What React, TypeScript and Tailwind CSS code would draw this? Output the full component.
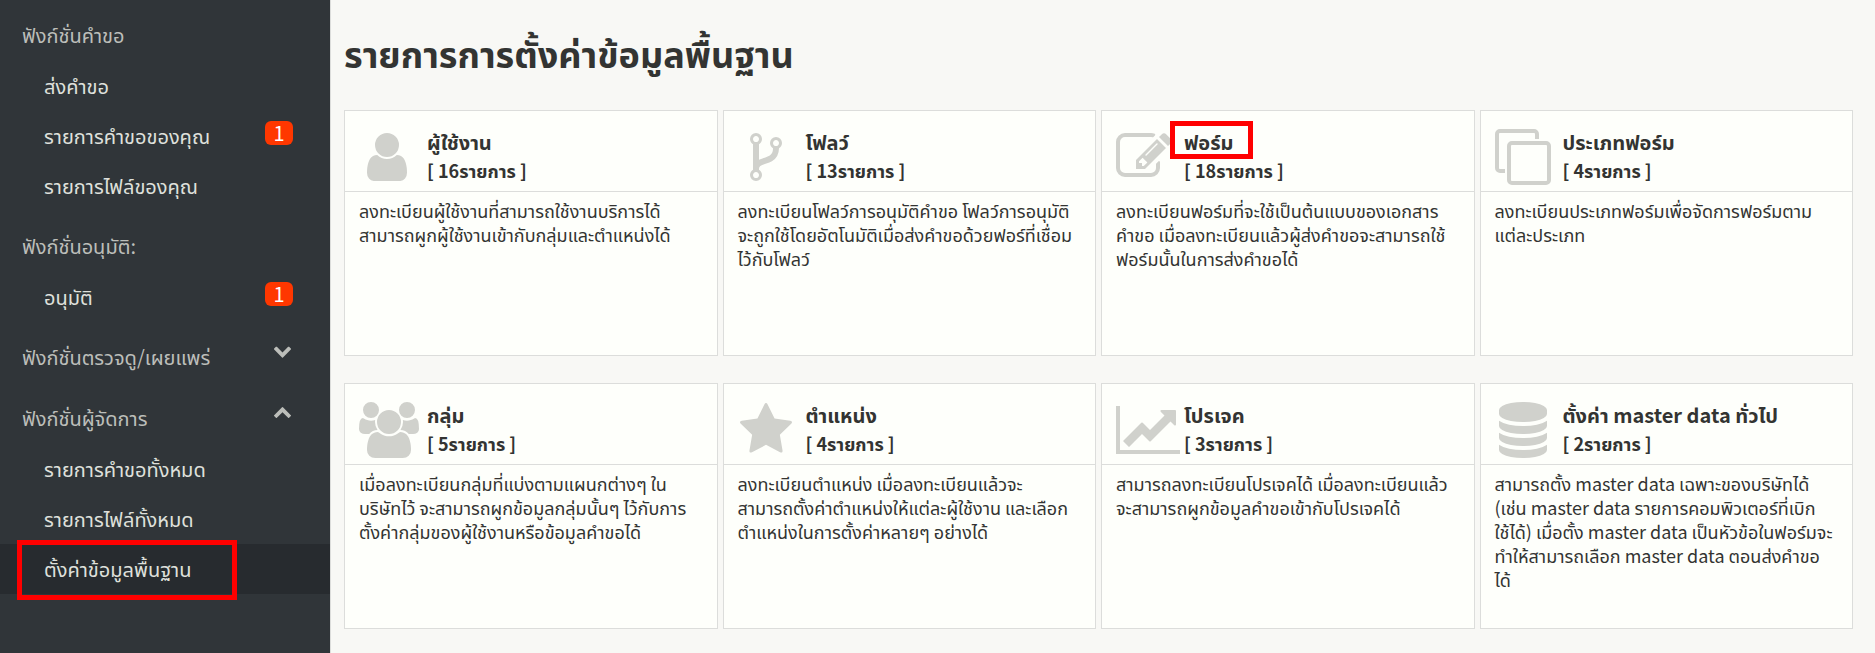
import React from 'react';

interface MenuItem {
  label: string;
  badge?: number;
  active?: boolean;
}

interface MenuSection {
  title: string;
  state?: 'open' | 'closed';
  items: MenuItem[];
}

interface SettingCard {
  icon: keyof typeof iconPaths;
  title: string;
  count: number;
  lines: string[];
  marked?: boolean;
}

const iconPaths = {
  chevronDown: 'M1683 808l-742 741q-19 19-45 19t-45-19l-742-741q-19-19-19-45.5t19-45.5l166-165q19-19 45-19t45 19l531 531 531-531q19-19 45-19t45 19l166 165q19 19 19 45.5t-19 45.5z',
  chevronUp: 'M1683 1331l-166 165q-19 19-45 19t-45-19l-531-531-531 531q-19 19-45 19t-45-19l-166-165q-19-19-19-45.5t19-45.5l742-741q19-19 45-19t45 19l742 741q19 19 19 45.5t-19 45.5z',
  user: 'M1536 1399q0 109-62.5 187t-150.5 78h-854q-88 0-150.5-78t-62.5-187q0-85 8.5-160.5t31.5-152 58.5-131 94-89 134.5-34.5q131 128 313 128t313-128q76 0 134.5 34.5t94 89 58.5 131 31.5 152 8.5 160.5zm-256-887q0 159-112.5 271.5t-271.5 112.5-271.5-112.5-112.5-271.5 112.5-271.5 271.5-112.5 271.5 112.5 112.5 271.5z',
  fork: 'M672 1472q0-40-28-68t-68-28-68 28-28 68 28 68 68 28 68-28 28-68zm0-1152q0-40-28-68t-68-28-68 28-28 68 28 68 68 28 68-28 28-68zm640 128q0-40-28-68t-68-28-68 28-28 68 28 68 68 28 68-28 28-68zm96 0q0 52-26 96.5t-70 69.5q-2 287-226 414-67 38-203 81-128 40-169.5 71t-41.5 100v26q44 25 70 69.5t26 96.5q0 80-56 136t-136 56-136-56-56-136q0-52 26-96.5t70-69.5v-820q-44-25-70-69.5t-26-96.5q0-80 56-136t136-56 136 56 56 136q0 52-26 96.5t-70 69.5v497q54-26 154-57 55-17 87.5-29.5t70.5-31 59-39.5 40.5-51 28-69.5 8.5-91.5q-44-25-70-69.5t-26-96.5q0-80 56-136t136-56 136 56 56 136z',
  edit: 'M888 1184l116-116-152-152-116 116v56h96v96h56zm440-720q-16-16-33 1l-350 350q-17 17-1 33t33-1l350-350q17-17 1-33zm80 594v190q0 119-84.5 203.5t-203.5 84.5h-832q-119 0-203.5-84.5t-84.5-203.5v-832q0-119 84.5-203.5t203.5-84.5h832q63 0 117 25 15 7 18 23 3 17-9 29l-49 49q-14 14-32 8-23-6-45-6h-832q-66 0-113 47t-47 113v832q0 66 47 113t113 47h832q66 0 113-47t47-113v-126q0-13 9-22l64-64q15-15 35-7t20 29zm-96-738l288 288-672 672h-288v-288zm444 132l-92 92-288-288 92-92q28-28 68-28t68 28l152 152q28 28 28 68t-28 68z',
  clone: 'M1664 1632v-1088q0-13-9.5-22.5t-22.5-9.5h-1088q-13 0-22.5 9.5t-9.5 22.5v1088q0 13 9.5 22.5t22.5 9.5h1088q13 0 22.5-9.5t9.5-22.5zm128-1088v1088q0 66-47 113t-113 47h-1088q-66 0-113-47t-47-113v-1088q0-66 47-113t113-47h1088q66 0 113 47t47 113zm-384-384v160h-128v-160q0-13-9.5-22.5t-22.5-9.5h-1088q-13 0-22.5 9.5t-9.5 22.5v1088q0 13 9.5 22.5t22.5 9.5h160v128h-160q-66 0-113-47t-47-113v-1088q0-66 47-113t113-47h1088q66 0 113 47t47 113z',
  users: 'M593 896q-162 5-265 128h-134q-82 0-138-40.5t-56-118.5q0-353 124-353 6 0 43.5 21t97.5 42.5 119 21.5q67 0 133-23-5 37-5 66 0 139 81 256zm1071 637q0 120-73 189.5t-194 69.5h-874q-121 0-194-69.5t-73-189.5q0-53 3.5-103.5t14-109 26.5-108.5 43-97.5 62-81 85.5-53.5 111.5-20q10 0 43 21.5t73 48 107 48 135 21.5 135-21.5 107-48 73-48 43-21.5q61 0 111.5 20t85.5 53.5 62 81 43 97.5 26.5 108.5 14 109 3.5 103.5zm-1024-1277q0 106-75 181t-181 75-181-75-75-181 75-181 181-75 181 75 75 181zm704 384q0 159-112.5 271.5t-271.5 112.5-271.5-112.5-112.5-271.5 112.5-271.5 271.5-112.5 271.5 112.5 112.5 271.5zm576 225q0 78-56 118.5t-138 40.5h-134q-103-123-265-128 81-117 81-256 0-29-5-66 66 23 133 23 59 0 119-21.5t97.5-42.5 43.5-21q124 0 124 353zm-128-609q0 106-75 181t-181 75-181-75-75-181 75-181 181-75 181 75 75 181z',
  star: 'M1728 647q0 22-26 48l-363 354 86 500q1 7 1 20 0 21-10.5 35.5t-30.5 14.5q-19 0-40-12l-449-236-449 236q-22 12-40 12-21 0-31.5-14.5t-10.5-35.5q0-6 2-20l86-500-364-354q-25-27-25-48 0-37 56-46l502-73 225-455q19-41 49-41t49 41l225 455 502 73q56 9 56 46z',
  chart: 'M2048 1536v128h-2048v-1536h128v1408h1920zm-128-1248v435q0 21-19.5 29.5t-35.5-7.5l-121-121-633 633q-10 10-23 10t-23-10l-233-233-416 416-192-192 585-585q10-10 23-10t23 10l233 233 464-464-121-121q-16-16-7.5-35.5t29.5-19.5h435q14 0 23 9t9 23z',
  database: 'M896 768q237 0 443-43t325-127v170q0 69-103 128t-280 93.5-385 34.5-385-34.5-280-93.5-103-128v-170q119 84 325 127t443 43zm0 768q237 0 443-43t325-127v170q0 69-103 128t-280 93.5-385 34.5-385-34.5-280-93.5-103-128v-170q119 84 325 127t443 43zm0-384q237 0 443-43t325-127v170q0 69-103 128t-280 93.5-385 34.5-385-34.5-280-93.5-103-128v-170q119 84 325 127t443 43zm0-1152q208 0 385 34.5t280 93.5 103 128v128q0 69-103 128t-280 93.5-385 34.5-385-34.5-280-93.5-103-128v-128q0-69 103-128t280-93.5 385-34.5z',
};

const sections: MenuSection[] = [
  {
    title: 'ฟังก์ชั่นคำขอ',
    items: [
      { label: 'ส่งคำขอ' },
      { label: 'รายการคำขอของคุณ', badge: 1 },
      { label: 'รายการไฟล์ของคุณ' },
    ],
  },
  {
    title: 'ฟังก์ชั่นอนุมัติ:',
    items: [{ label: 'อนุมัติ', badge: 1 }],
  },
  {
    title: 'ฟังก์ชั่นตรวจดู/เผยแพร่',
    state: 'closed',
    items: [],
  },
  {
    title: 'ฟังก์ชั่นผู้จัดการ',
    state: 'open',
    items: [
      { label: 'รายการคำขอทั้งหมด' },
      { label: 'รายการไฟล์ทั้งหมด' },
      { label: 'ตั้งค่าข้อมูลพื้นฐาน', active: true },
    ],
  },
];

const cards: SettingCard[] = [
  {
    icon: 'user',
    title: 'ผู้ใช้งาน',
    count: 16,
    lines: ['ลงทะเบียนผู้ใช้งานที่สามารถใช้งานบริการได้', 'สามารถผูกผู้ใช้งานเข้ากับกลุ่มและตำแหน่งได้'],
  },
  {
    icon: 'fork',
    title: 'โฟลว์',
    count: 13,
    lines: ['ลงทะเบียนโฟลว์การอนุมัติคำขอ โฟลว์การอนุมัติ', 'จะถูกใช้โดยอัตโนมัติเมื่อส่งคำขอด้วยฟอร์ที่เชื่อม', 'ไว้กับโฟลว์'],
  },
  {
    icon: 'edit',
    title: 'ฟอร์ม',
    count: 18,
    marked: true,
    lines: ['ลงทะเบียนฟอร์มที่จะใช้เป็นต้นแบบของเอกสาร', 'คำขอ เมื่อลงทะเบียนแล้วผู้ส่งคำขอจะสามารถใช้', 'ฟอร์มนั้นในการส่งคำขอได้'],
  },
  {
    icon: 'clone',
    title: 'ประเภทฟอร์ม',
    count: 4,
    lines: ['ลงทะเบียนประเภทฟอร์มเพื่อจัดการฟอร์มตาม', 'แต่ละประเภท'],
  },
  {
    icon: 'users',
    title: 'กลุ่ม',
    count: 5,
    lines: ['เมื่อลงทะเบียนกลุ่มที่แบ่งตามแผนกต่างๆ ใน', 'บริษัทไว้ จะสามารถผูกข้อมูลกลุ่มนั้นๆ ไว้กับการ', 'ตั้งค่ากลุ่มของผู้ใช้งานหรือข้อมูลคำขอได้'],
  },
  {
    icon: 'star',
    title: 'ตำแหน่ง',
    count: 4,
    lines: ['ลงทะเบียนตำแหน่ง เมื่อลงทะเบียนแล้วจะ', 'สามารถตั้งค่าตำแหน่งให้แต่ละผู้ใช้งาน และเลือก', 'ตำแหน่งในการตั้งค่าหลายๆ อย่างได้'],
  },
  {
    icon: 'chart',
    title: 'โปรเจค',
    count: 3,
    lines: ['สามารถลงทะเบียนโปรเจคได้ เมื่อลงทะเบียนแล้ว', 'จะสามารถผูกข้อมูลคำขอเข้ากับโปรเจคได้'],
  },
  {
    icon: 'database',
    title: 'ตั้งค่า master data ทั่วไป',
    count: 2,
    lines: ['สามารถตั้ง master data เฉพาะของบริษัทได้', '(เช่น master data รายการคอมพิวเตอร์ที่เบิก', 'ใช้ได้) เมื่อตั้ง master data เป็นหัวข้อในฟอร์มจะ', 'ทำให้สามารถเลือก master data ตอนส่งคำขอ', 'ได้'],
  },
];

const Icon: React.FC<{ name: keyof typeof iconPaths; className: string }> = ({ name, className }) => (
  <svg viewBox="0 0 1792 1792" className={className} aria-hidden="true">
    <path d={iconPaths[name]} />
  </svg>
);

const Sidebar: React.FC = () => (
  <nav className="w-[331px] shrink-0 bg-[#303539] border-r border-[#dcdddb] text-xl">
    {sections.map((section) => (
      <div key={section.title}>
        {section.state ? (
          <button
            type="button"
            aria-expanded={section.state === 'open'}
            className="w-full h-[61px] pl-[22px] pr-[38px] flex items-center justify-between text-[#bcbeba]"
          >
            <span className="pt-2">{section.title}</span>
            <Icon
              name={section.state === 'open' ? 'chevronUp' : 'chevronDown'}
              className="w-[19px] h-[19px] mb-1 fill-current"
            />
          </button>
        ) : (
          <h2 className="h-[61px] pl-[22px] pt-2 flex items-center text-[#bcbeba]">{section.title}</h2>
        )}
        <ul>
          {section.items.map((item) => (
            <li key={item.label}>
              <a
                href="#"
                className={`relative h-[50px] pl-11 pr-[37px] flex items-center justify-between text-[#dfe0dc] ${item.active ? 'bg-[#272b2f]' : ''}`}
              >
                <span>{item.label}</span>
                {item.badge && (
                  <span className="w-7 h-6 mb-1.5 rounded-md bg-[#ff3700] text-white leading-6 text-center">
                    {item.badge}
                  </span>
                )}
                {item.active && (
                  <span className="absolute left-[17px] -top-1 w-[220px] h-[60px] border-[5px] border-[#ff0000]"></span>
                )}
              </a>
            </li>
          ))}
        </ul>
      </div>
    ))}
  </nav>
);

const Card: React.FC<{ card: SettingCard }> = ({ card }) => (
  <section className="min-h-[246px] bg-[#fefffb] border border-[#dcdddb]">
    <header className="h-[81px] pl-[14px] flex border-b border-[#dcdddb]">
      <Icon name={card.icon} className="w-14 h-14 mt-[18px] mr-3 shrink-0 overflow-visible fill-[#d0d1cc]" />
      <div className="pt-4 font-bold">
        <h2 className="relative text-xl leading-[29px]">
          <a href="#">{card.title}</a>
          {card.marked && (
            <span className="absolute -left-[14px] -top-[6px] w-[83px] h-[38px] border-[5px] border-[#ff0000]"></span>
          )}
        </h2>
        <p className="text-lg leading-[29px]">[ {card.count}รายการ ]</p>
      </div>
    </header>
    <p className="px-[14px] pt-1.5 text-lg leading-6 whitespace-pre-line">{card.lines.join('\n')}</p>
  </section>
);

const App: React.FC = () => {
  return (
    <div className="min-h-screen flex bg-[#f8f8f5] text-[#333432] font-['Noto_Sans_CJK_JP','Noto_Sans_Thai',sans-serif]">
      <Sidebar />
      <main className="flex-1 pl-[13px] pr-[22px] pt-7 pb-6">
        <h1 className="text-4xl leading-[48px] font-bold mb-[34px]">รายการการตั้งค่าข้อมูลพื้นฐาน</h1>
        <div className="grid grid-cols-4 gap-x-[5px] gap-y-[27px]">
          {cards.map((card) => (
            <Card key={card.icon} card={card} />
          ))}
        </div>
      </main>
    </div>
  );
};

export default App;
